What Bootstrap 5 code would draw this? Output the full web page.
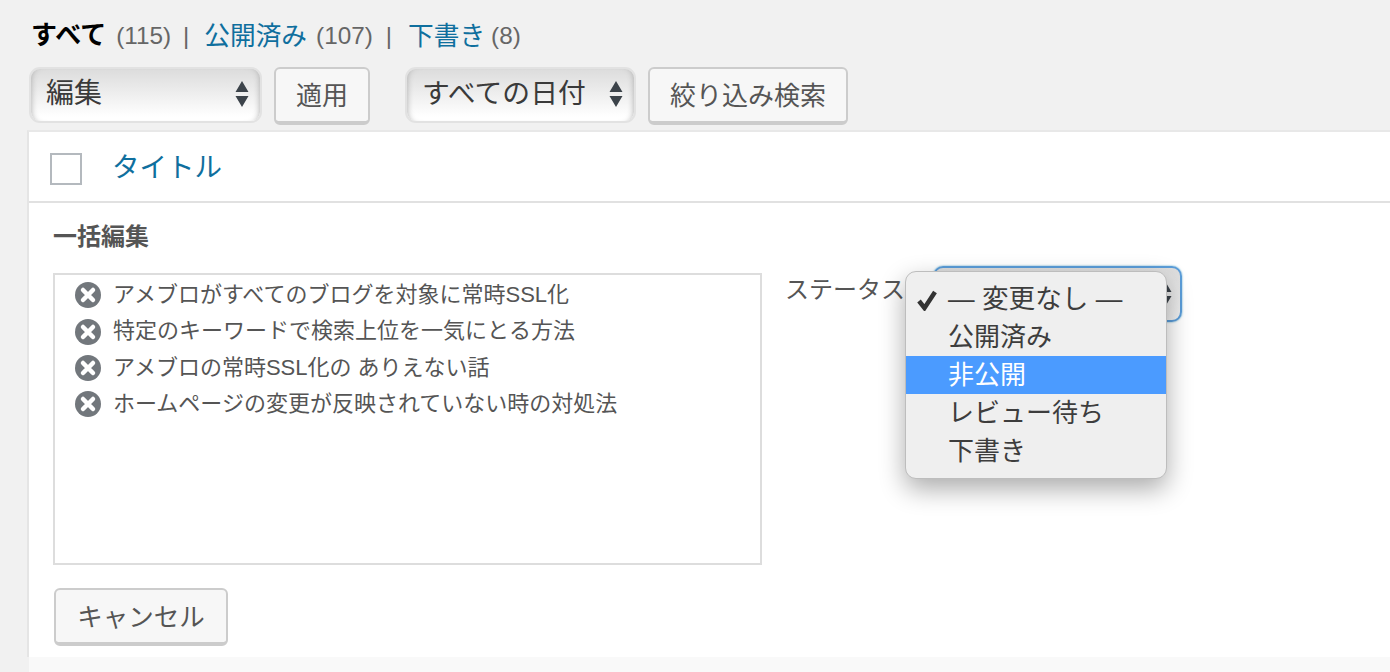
<!DOCTYPE html>
<html lang="ja">
<head>
<meta charset="utf-8">
<title>一括編集</title>
<link rel="stylesheet" href="https://cdn.jsdelivr.net/npm/bootstrap@5.3.0/dist/css/bootstrap.min.css">
<style>
html,body{height:672px;overflow:hidden}
body{background:#f1f1f1;color:#555;font-family:"Liberation Sans","Noto Sans CJK JP",sans-serif;font-size:26px;line-height:1.2}
a{color:#0f6f9e;text-decoration:none}
.wp-page{padding:21px 0 0 27px;width:1390px}
.sub-links{height:30px;padding-left:4px;margin-bottom:16px;display:flex;align-items:center;white-space:nowrap;color:#666}
.sub-links b{color:#000;font-weight:700;font-size:26px}
.sub-links a{font-size:25.7px}
.link-num{font-size:24.3px;margin-left:10px}
.link-num-tight{font-size:24.3px;margin-left:9px}
.link-num-last{font-size:24.3px;margin-left:6px}
.link-sep{font-size:24px;margin:0 15px 0 12px}
.link-sep-wide{font-size:24px;margin:0 16px 0 13px}
.tool-row{height:58px;margin-bottom:5px;padding-left:2px}
.fake-select{height:56px;border:2px solid #e2e2e2;border-radius:11px;display:flex;align-items:center;justify-content:space-between;font-size:28px;color:#3a3a3a;padding:0 11px 2px 15px;background:linear-gradient(#dcdcdc,#f1f1f1 55%,#fff 92%);box-shadow:inset 6px 0 6px -6px #aaa,inset -6px 0 6px -6px #aaa}
.sel-edit{width:233px}
.sel-date{width:231px;margin-left:35px;font-size:27.800px}
.wp-btn{height:58px;border:2px solid #ccc;border-bottom-width:4px;border-radius:6px;background:#f7f7f7;color:#555;font-size:26px;padding:2px 20px 0;line-height:1;margin-left:12px}
.list-panel{background:#fff;border-left:2px solid #e5e5e5;border-top:2px solid #e8e8e8;height:527px;position:relative}
.head-row{height:71px;border-bottom:2px solid #e1e1e1;padding-left:21px;gap:30px}
.head-row a{font-size:27.500px;position:relative;top:1px}
.check-box{width:32px;height:32px;border:2px solid #b4b9be;background:#fff;margin-top:5px}
.edit-area{padding:19px 0 0 24px}
.edit-title{font-size:24px;font-weight:700;color:#555;line-height:30px;margin-bottom:21px}
.title-box{width:709px;height:292px;border:2px solid #ddd;padding:2px 0 0 20px;font-size:22px;color:#555}
.title-line{height:36.4px;gap:12px;white-space:nowrap}
.status-col{margin-left:23px;height:60px;position:relative}
.status-label{font-size:24px;color:#555;line-height:30px;margin-top:2px;width:148px;white-space:nowrap}
.status-select{width:249px;height:56px;margin-top:-7px;border:2px solid #5b9dd9;border-radius:10px;background:linear-gradient(#ddd,#f1f1f1);box-shadow:0 0 2px rgba(30,140,190,.8);padding-right:8px}
.pop-menu{position:absolute;left:120px;top:-2px;width:262px;height:208px;background:#efefef;border:1px solid #bdbdbd;border-radius:11px;box-shadow:0 10px 26px rgba(0,0,0,.33);padding:8px 0 0;font-size:26px;color:#3d3d3d;z-index:5}
.pop-item{height:38px;padding-left:42px;line-height:38px;position:relative;white-space:nowrap}
.pop-item.is-on{background:#4b9bff;color:#fff}
.pop-first{font-size:26.600px}
.tick{position:absolute;left:10px;top:9px}
.foot-row{margin-top:23px;padding-left:1px}
.foot-row .wp-btn{margin-left:0;width:174px;padding:4px 0 0;font-size:25.500px}
.foot-strip{position:absolute;left:0;right:0;top:525px;height:20px;background:#f9f9f9}
</style>
</head>
<body>
<div class="wp-page">
  <div class="sub-links"><b>すべて</b><span class="link-num">(115)</span><span class="link-sep">|</span><a href="#">公開済み</a><span class="link-num-tight">(107)</span><span class="link-sep-wide">|</span><a href="#">下書き</a><span class="link-num-last">(8)</span></div>
  <div class="tool-row d-flex align-items-start">
    <div class="fake-select sel-edit"><span>編集</span>
      <svg width="14" height="26" viewBox="0 0 14 26"><path fill="#3c434a" d="M7 0l6.500 11H.5zM7 26L.5 15h13z"/></svg></div>
    <button type="button" class="wp-btn">適用</button>
    <div class="fake-select sel-date"><span>すべての日付</span>
      <svg width="14" height="26" viewBox="0 0 14 26"><path fill="#3c434a" d="M7 0l6.500 11H.5zM7 26L.5 15h13z"/></svg></div>
    <button type="button" class="wp-btn">絞り込み検索</button>
  </div>
  <div class="list-panel">
    <div class="head-row d-flex align-items-center">
      <div class="check-box"></div>
      <a href="#">タイトル</a>
    </div>
    <div class="edit-area">
      <div class="edit-title">一括編集</div>
      <div class="d-flex align-items-start">
        <div class="title-box">
          <div class="title-line d-flex align-items-center"><svg width="26" height="26" viewBox="0 0 26 26"><circle cx="13" cy="13" r="13" fill="#72777c"/><path d="M8 8l10 10M18 8L8 18" stroke="#fff" stroke-width="4.500" stroke-linecap="round"/></svg><span>アメブロがすべてのブログを対象に常時SSL化</span></div>
          <div class="title-line d-flex align-items-center"><svg width="26" height="26" viewBox="0 0 26 26"><circle cx="13" cy="13" r="13" fill="#72777c"/><path d="M8 8l10 10M18 8L8 18" stroke="#fff" stroke-width="4.500" stroke-linecap="round"/></svg><span>特定のキーワードで検索上位を一気にとる方法</span></div>
          <div class="title-line d-flex align-items-center"><svg width="26" height="26" viewBox="0 0 26 26"><circle cx="13" cy="13" r="13" fill="#72777c"/><path d="M8 8l10 10M18 8L8 18" stroke="#fff" stroke-width="4.500" stroke-linecap="round"/></svg><span>アメブロの常時SSL化の ありえない話</span></div>
          <div class="title-line d-flex align-items-center"><svg width="26" height="26" viewBox="0 0 26 26"><circle cx="13" cy="13" r="13" fill="#72777c"/><path d="M8 8l10 10M18 8L8 18" stroke="#fff" stroke-width="4.500" stroke-linecap="round"/></svg><span>ホームページの変更が反映されていない時の対処法</span></div>
        </div>
        <div class="status-col d-flex align-items-start">
          <div class="status-label">ステータス</div>
          <div class="status-select d-flex align-items-center justify-content-end"><svg width="14" height="26" viewBox="0 0 14 26"><path fill="#3c434a" d="M7 0l6.500 11H.5zM7 26L.5 15h13z"/></svg></div>
          <div class="pop-menu">
            <div class="pop-item pop-first"><svg class="tick" width="22" height="22" viewBox="0 0 22 22"><path d="M3 12l5.500 7L19 3" fill="none" stroke="#333" stroke-width="4.500"/></svg>— 変更なし —</div>
            <div class="pop-item">公開済み</div>
            <div class="pop-item is-on">非公開</div>
            <div class="pop-item">レビュー待ち</div>
            <div class="pop-item">下書き</div>
          </div>
        </div>
      </div>
      <div class="foot-row"><button type="button" class="wp-btn">キャンセル</button></div>
    </div>
    <div class="foot-strip"></div>
  </div>
</div>
<script src="https://cdn.jsdelivr.net/npm/bootstrap@5.3.0/dist/js/bootstrap.bundle.min.js"></script>
</body>
</html>
